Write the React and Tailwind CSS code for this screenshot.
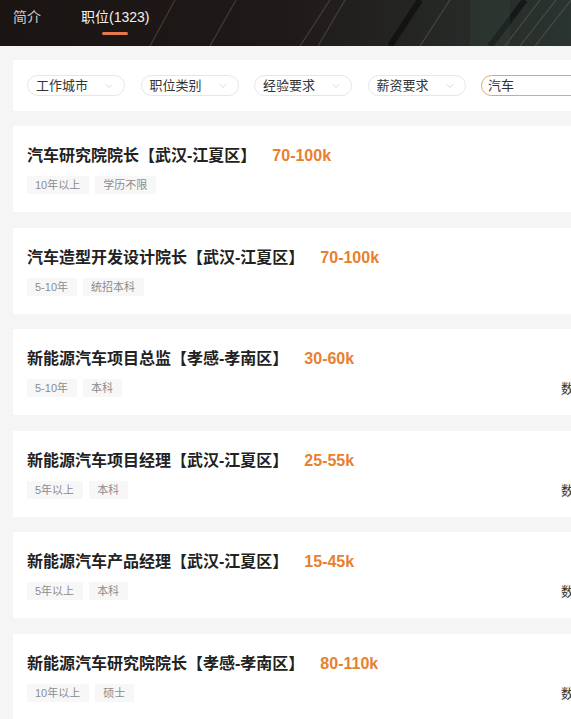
import { ChevronDown } from 'lucide-react';

const jobs = [
    { title: '汽车研究院院长【武汉-江夏区】', salary: '70-100k', tags: ['10年以上', '学历不限'] },
    { title: '汽车造型开发设计院长【武汉-江夏区】', salary: '70-100k', tags: ['5-10年', '统招本科'] },
    { title: '新能源汽车项目总监【孝感-孝南区】', salary: '30-60k', tags: ['5-10年', '本科'], side: '数字化' },
    { title: '新能源汽车项目经理【武汉-江夏区】', salary: '25-55k', tags: ['5年以上', '本科'], side: '数字化' },
    { title: '新能源汽车产品经理【武汉-江夏区】', salary: '15-45k', tags: ['5年以上', '本科'], side: '数字化' },
    { title: '新能源汽车研究院院长【孝感-孝南区】', salary: '80-110k', tags: ['10年以上', '硕士'], side: '数字化' },
];

const filters = ['工作城市', '职位类别', '经验要求', '薪资要求'];

function Header() {
    return (
        <div className="relative h-[46px] bg-gradient-to-r from-[#1a1413] via-[#1f1a19] to-[#2a3430] overflow-hidden">
            {/* background photo streaks */}
            <svg className="absolute inset-0" width="571" height="46" viewBox="0 0 571 46">
                <g stroke="#8a7a6a" strokeOpacity="0.35" strokeWidth="1.2">
                    <line x1="150" y1="46" x2="175" y2="0" />
                    <line x1="210" y1="46" x2="236" y2="0" />
                    <line x1="300" y1="46" x2="330" y2="0" />
                    <line x1="318" y1="46" x2="345" y2="0" />
                    <line x1="420" y1="46" x2="450" y2="0" />
                    <line x1="505" y1="46" x2="540" y2="0" />
                    <line x1="520" y1="46" x2="556" y2="0" />
                    <line x1="535" y1="46" x2="571" y2="0" />
                </g>
                <g stroke="#000" strokeOpacity="0.45" strokeWidth="6">
                    <line x1="490" y1="46" x2="525" y2="0" />
                    <line x1="390" y1="46" x2="420" y2="0" />
                </g>
                <rect x="470" y="0" width="40" height="46" fill="#3a4a44" fillOpacity="0.25" />
            </svg>
            <div className="relative flex items-start gap-[40px] pl-[13px] pt-[7px] text-[14px] leading-[20px]">
                <span className="text-[#d0cccc]">简介</span>
                <div className="flex flex-col items-center">
                    <span className="text-[#f4f0ee]">职位(1323)</span>
                    <span className="mt-[5px] h-[2.5px] w-[26px] rounded-full bg-[#e27a4c]" />
                </div>
            </div>
        </div>
    );
}

function FilterBar() {
    return (
        <div className="ml-[13px] mt-[14px] w-[640px] h-[51px] bg-white flex items-center gap-[15.5px] pl-[14px]">
            {filters.map((f) => (
                <div key={f} className="w-[98px] h-[21px] shrink-0 rounded-full border border-[#e6e6e6] flex items-center justify-between pl-[8px] pr-[9px]">
                    <span className="text-[13px] text-[#333]">{f}</span>
                    <ChevronDown size={12} strokeWidth={1.5} className="text-[#c9c9c9]" />
                </div>
            ))}
            <div className="w-[140px] h-[21px] shrink-0 rounded-l-full border border-[#d9aa6a] flex items-center pl-[6px]">
                <span className="text-[13px] text-[#333]">汽车</span>
            </div>
        </div>
    );
}

function JobCard({ job }) {
    return (
        <div className="h-[86px] w-[640px] bg-white flex">
            <div className="w-[548px] shrink-0 pl-[14px] pt-[19px]">
                <div className="flex items-center h-[22px]">
                    <span className="text-[16px] font-bold text-[#222]">{job.title}</span>
                    <span className="ml-4 text-[16px] font-bold text-[#e8802f]">{job.salary}</span>
                </div>
                <div className="mt-[9px] flex gap-[6px]">
                    {job.tags.map((t) => (
                        <span key={t} className="h-[18px] pl-[8px] pr-[9px] bg-[#f7f7f8] text-[11px] leading-[18px] text-[#8c8c8c]">{t}</span>
                    ))}
                </div>
            </div>
            {job.side && (
                <div className="mt-[47px]">
                    <span className="bg-[#f7f7f8] text-[13px] leading-[18px] text-[#333] whitespace-nowrap">{job.side}</span>
                </div>
            )}
        </div>
    );
}

export default function App() {
    return (
        <div className="w-[571px] h-[719px] overflow-hidden bg-[#f5f5f5]" style={{ fontFamily: '"Liberation Sans", "Noto Sans CJK SC", sans-serif' }}>
            <Header />
            <FilterBar />
            <div className="ml-[13px] mt-[15px] flex flex-col gap-[15.6px]">
                {jobs.map((job) => (
                    <JobCard key={job.title + job.salary} job={job} />
                ))}
            </div>
        </div>
    );
}
